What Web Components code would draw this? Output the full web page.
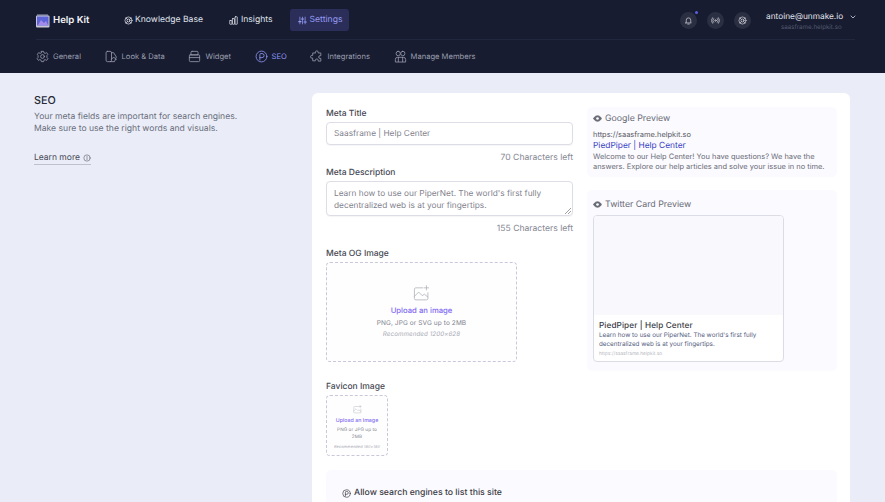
<!DOCTYPE html>
<html><head><meta charset="utf-8"><title>Help Kit SEO</title>
<style>
html,body{margin:0;padding:0;height:502px;overflow:hidden;background:#eaedf8;font-family:Inter,"Liberation Sans",sans-serif;text-rendering:geometricPrecision}
</style></head><body>
<hk-header></hk-header>
<hk-page></hk-page>
<script>
const I={
 kb:'<circle cx="12" cy="12" r="9.500"/><circle cx="12" cy="12" r="4"/><path d="M5.300 5.300l3.900 3.900M18.700 5.300l-3.900 3.900M5.300 18.700l3.900-3.900M18.700 18.700l-3.900-3.900"/>',
 ins:'<rect x="2" y="12" width="6" height="10" rx="1"/><rect x="9" y="7" width="6" height="15" rx="1"/><rect x="16" y="2" width="6" height="20" rx="1"/>',
 set:'<path d="M5 3v18M12 3v18M19 3v18"/><path d="M2 15h6M9 8h6M16 16h6" stroke-width="3"/>',
 gear:'<path d="M10 2.500h4l.7 2.800 2.300 1 2.500-1.500 2.500 3.200-1.800 2.200v3.600l1.800 2.200-2.500 3.200-2.500-1.500-2.300 1-.7 2.800h-4l-.7-2.800-2.300-1-2.500 1.500-2.500-3.200 1.800-2.200v-3.600L2.500 8l2.500-3.200 2.500 1.500 2.300-1z"/><circle cx="12" cy="12" r="3.500"/>',
 look:'<rect x="2" y="2.500" width="10" height="19" rx="2.500"/><path d="M12 5h4l5 8-3.500 8.500H10M12 17l4-4 5 5"/>',
 widget:'<path d="M7.500 2.500h9a2 2 0 0 1 2 2V9h-13V4.500a2 2 0 0 1 2-2zM4 9h16a1.500 1.500 0 0 1 1.500 1.500v9a2 2 0 0 1-2 2h-15a2 2 0 0 1-2-2v-9A1.500 1.500 0 0 1 4 9zM2.500 14h19"/>',
 seo:'<circle cx="12" cy="12" r="10"/><path d="M9 18.500V8.500a2 2 0 0 1 2-2h2a3.800 3.800 0 0 1 0 7.600H9"/>',
 puzzle:'<path d="M10 4a2.500 2.500 0 0 1 5 0v1.500h5v5h-1.500a2.500 2.500 0 0 0 0 5H20v5h-5v-1.500a2.500 2.500 0 0 0-5 0V20H5v-5H3.500a2.500 2.500 0 0 1 0-5H5V5.500h5z"/>',
 members:'<rect x="4" y="2.500" width="7.500" height="8" rx="3.500"/><rect x="12.500" y="2.500" width="7.500" height="8" rx="3.500"/><path d="M2.500 21.500v-4a4 4 0 0 1 4-4h11a4 4 0 0 1 4 4v4zM8 13.500v8M16 13.500v8"/>',
 bell:'<path d="M6 17V11a6 6 0 0 1 12 0v6l1.500 1.500h-15zM10 21.500h4"/>',
 radio:'<circle cx="12" cy="12" r="2"/><path d="M7 7a7 7 0 0 0 0 10M17 7a7 7 0 0 1 0 10M4 4.500a11 11 0 0 0 0 15M20 4.500a11 11 0 0 1 0 15"/>',
 eye:'<path d="M1 12s4-8 11-8 11 8 11 8-4 8-11 8S1 12 1 12z" fill="currentColor"/><circle cx="12" cy="12" r="3.500" fill="#fff" stroke="none"/>',
 info:'<circle cx="12" cy="12" r="9.500"/><path d="M12 11v6M12 7v1.500"/>',
 chev:'<path d="M6 9l6 6 6-6"/>',
 img:'<path d="M14 4H4a2 2 0 0 0-2 2v13a2 2 0 0 0 2 2h15a2 2 0 0 0 2-2v-8"/><path d="M2 16l6-6 5 5 3-2 5 4"/><path d="M19 1v6M16 4h6"/>'
};
const svg=(n,s,w=1.7)=>`<svg width="${s}" height="${s}" viewBox="0 0 24 24" fill="none" stroke="currentColor" stroke-width="${w}" stroke-linecap="round" stroke-linejoin="round" aria-hidden="true">${I[n]}</svg>`;
class Base extends HTMLElement{
 constructor(){super();this.attachShadow({mode:'open'}).innerHTML=this.markup()}
}
function def(n,c){customElements.define(n,c)}
def('hk-nav-link',class extends Base{markup(){const a=this.hasAttribute('active');const t=this.hasAttribute('tight');return `<style>
:host{display:inline-flex;align-items:center;gap:${t?2:3}px;height:22px;padding:0 ${t?10:(a?7:8)}px 0 8px;${a?'margin-left:1px;':''}border-radius:3px;font-size:8.600px;color:${a?'#949bf3':'#dfe1ea'};background:${a?'#2b2e58':'transparent'}}
</style>${svg(this.getAttribute('icon'),9,2)}<slot></slot>`}});
def('hk-sub-link',class extends Base{markup(){const a=this.hasAttribute('active');return `<style>
:host{display:inline-flex;align-items:center;gap:4px;font-size:7.600px;color:${a?'#8f97f2':'#9a9dac'}}
svg{flex:none}
</style>${svg(this.getAttribute('icon'),13,1.500)}<slot></slot>`}});
def('hk-round-btn',class extends Base{markup(){return `<style>
:host{position:relative;display:flex;align-items:center;justify-content:center;width:17px;height:17px;border-radius:50%;background:#2b2f42;color:#c8cad4}
i{position:absolute;top:-1px;right:-1px;width:3.500px;height:3.500px;border-radius:50%;background:#5a5fe0}
</style>${svg(this.getAttribute('icon'),9,2)}${this.hasAttribute('dot')?'<i></i>':''}`}});
def('hk-header',class extends Base{markup(){return `<style>
:host{display:block;height:73px;background:#171c31;box-sizing:border-box;padding:0 30px 0 36px}
.top{display:flex;align-items:center;height:38px;box-sizing:content-box;border-bottom:1px solid #222740;padding-top:1px}
.logo{display:flex;align-items:center;gap:3px;font-size:9.600px;font-weight:600;color:#f3f4f8;width:80px;flex:none}
nav{display:flex;gap:8px;align-items:center}
.right{margin-left:auto;display:flex;align-items:center;gap:10px}
.acct{margin-left:5px;width:89px;display:flex;flex-direction:column;align-items:flex-start;position:relative;top:1.500px}
.mail{display:flex;align-items:center;gap:6px;font-size:8.300px;color:#e4e5ec}
.mail svg{color:#c8cad4}
.sub{font-size:6.200px;color:#555a6f;margin-left:15px;margin-top:1.500px}
.subnav{display:flex;align-items:center;height:33px;gap:23.600px;position:relative;top:-.5px}
</style>
<div class="top"><div class="logo"><svg width="14" height="15" viewBox="0 0 14 15"><rect x="1" y="1" width="11" height="2" fill="#59607e"/><rect x="0" y="2.500" width="13.500" height="12" rx="1" fill="#c9c7d6"/><rect x="1" y="3.500" width="11.500" height="9" fill="#5d64d8"/><path d="M2 12l3-5 3 3 2-2 2 4z" fill="#a58ae8"/></svg><span>Help Kit</span></div>
<nav><hk-nav-link icon="kb" tight>Knowledge Base</hk-nav-link><hk-nav-link icon="ins">Insights</hk-nav-link><hk-nav-link icon="set" active>Settings</hk-nav-link></nav>
<div class="right"><hk-round-btn icon="bell" dot></hk-round-btn><hk-round-btn icon="radio"></hk-round-btn><hk-round-btn icon="kb"></hk-round-btn>
<div class="acct"><div class="mail">antoine@unmake.io ${svg('chev',8,2.500)}</div><div class="sub">saasframe.helpkit.so</div></div></div></div>
<div class="subnav"><hk-sub-link icon="gear">General</hk-sub-link><hk-sub-link icon="look">Look &amp; Data</hk-sub-link><hk-sub-link icon="widget">Widget</hk-sub-link><hk-sub-link icon="seo" active>SEO</hk-sub-link><hk-sub-link icon="puzzle">Integrations</hk-sub-link><hk-sub-link icon="members">Manage Members</hk-sub-link></div>`}});
def('hk-field',class extends Base{markup(){return `<style>
:host{display:block}
label{display:block;font-size:8.500px;font-weight:500;color:#464854;line-height:12px;padding-top:1px;margin-bottom:2px}
.hint{text-align:right;font-size:8.600px;line-height:12px;color:#868894;margin:7px 0 -1px}
</style><label>${this.getAttribute('label')}</label><slot></slot>${this.hasAttribute('hint')?`<div class="hint">${this.getAttribute('hint')}</div>`:''}`}});
def('hk-input',class extends Base{markup(){const m=this.hasAttribute('multi');return `<style>
:host{display:block;position:relative;box-sizing:border-box;border:1px solid #dcdde6;border-radius:4px;background:#fff;padding:${m?'5.500px 7px 0':'1px 7px 0'};${m?'height:35px':'height:23px;display:flex;align-items:center'};font-size:8.300px;line-height:12.400px;color:#7f818d;box-shadow:0 1px 1px rgba(30,30,60,.04)}
svg{position:absolute;right:1px;bottom:1px}
</style><slot></slot>${m?'<svg width="6" height="6" viewBox="0 0 6 6" stroke="#777" stroke-width=".7"><path d="M0 6L6 0M3 6L6 3"/></svg>':''}`}});
def('hk-upload',class extends Base{markup(){const s=this.hasAttribute('small');return `<style>
:host{display:flex;flex-direction:column;align-items:center;justify-content:center;box-sizing:border-box;border:1px dashed #c9c8da;border-radius:4px;background:#fefefe;text-align:center;width:${s?'62px':'191px'};height:${s?'61px':'100px'};${s?'padding-top:4px':''}}
svg{color:#aeb0ba}
.u{color:#8169f2;font-size:${s?'5.300px':'7.700px'};font-weight:500;margin-top:${s?'2.500px':'3px'};line-height:${s?'8px':'12px'}}
.p{color:#80828e;font-size:${s?'4.600px':'6.500px'};line-height:${s?'7px':'9px'};margin-top:2px;width:${s?'42px':'auto'};letter-spacing:.1px}
.r{color:#a9abb5;font-style:italic;font-size:${s?'3.900px':'6.200px'};line-height:${s?'7px':'9px'};margin-top:2px;letter-spacing:.1px}
</style>${svg('img',s?9:17,1.100)}<div class="u">Upload an image</div><div class="p">${this.getAttribute('types')}</div><div class="r">${this.getAttribute('rec')}</div>`}});
def('hk-preview',class extends Base{markup(){return `<style>
:host{display:block;background:#fbfafe;border-radius:5px;padding:${this.getAttribute('pad')}}
.h{display:flex;align-items:center;gap:3px;font-size:8.800px;line-height:15px;color:#686a76}
</style><div class="h">${svg('eye',9,1)}<span>${this.getAttribute('title')}</span></div><slot></slot>`}});
def('hk-google',class extends Base{markup(){return `<style>
:host{display:block;font-size:7.450px;color:#696b77;line-height:10.300px;margin-top:4px}
.u{color:#55575f;line-height:10.500px}.t{font-size:8.400px;line-height:11.500px;color:#3740c4}
</style><div class="u">https://saasframe.helpkit.so</div><div class="t">PiedPiper | Help Center</div><div>Welcome to our Help Center! You have questions? We have the answers. Explore our help articles and solve your issue in no time.</div>`}});
def('hk-card-preview',class extends Base{markup(){return `<style>
:host{display:block;width:191px;box-sizing:border-box;border:1px solid #dcdce6;border-radius:4px;margin-top:3px;height:147px;overflow:hidden;background:#fff}
.img{height:99px;background:#f9f8fd}
.b{padding:5px 5px 0}
.t{font-size:8.200px;font-weight:500;color:#3a3b45;line-height:10px;letter-spacing:.1px}
.d{font-size:6.300px;color:#565e80;line-height:9.300px;margin-top:.5px}
.l{font-size:4.800px;color:#b5b7c0;line-height:8px;margin-top:1px}
</style><div class="img"></div><div class="b"><div class="t">PiedPiper | Help Center</div><div class="d">Learn how to use our PiperNet. The world's first fully decentralized web is at your fingertips.</div><div class="l">https://saasframe.helpkit.so</div></div>`}});
def('hk-aside',class extends Base{markup(){return `<style>
:host{display:block;width:278px;flex:none;box-sizing:border-box}
h2{margin:0;font-size:10.800px;font-weight:500;color:#272937;line-height:15px}
p{margin:3px 0 0;font-size:8.600px;line-height:12.200px;color:#6b6d7c}
a{display:inline-flex;align-items:center;gap:3px;margin-top:17.600px;font-size:8.500px;color:#474955;border-bottom:1px solid #bfc1cc;padding-bottom:1px;line-height:10px}
</style><h2>SEO</h2><p>Your meta fields are important for search engines.<br>Make sure to use the right words and visuals.</p><a>Learn more ${svg('info',8,1.600)}</a>`}});
def('hk-page',class extends Base{markup(){return `<style>
:host{display:flex;padding:20px 35px 0 34px;height:429px;box-sizing:border-box;overflow:hidden}
.card{width:538px;height:600px;flex:none;background:#fff;border-radius:6px 6px 0 0;padding:14px 13px 0 14px;box-sizing:border-box}
.cols{display:grid;grid-template-columns:247px 250px;column-gap:14px}
.l{display:flex;flex-direction:column}
.r{display:flex;flex-direction:column;gap:13px}
.allow{margin-top:14px;background:#fbfafe;border-radius:5px;height:60px;padding:15.500px 16px;box-sizing:border-box;display:flex;align-items:flex-start;gap:3px;font-size:8.700px;font-weight:500;color:#3a3b45;line-height:15px}
.allow svg{margin-top:3px}
</style>
<hk-aside></hk-aside>
<div class="card"><div class="cols"><div class="l">
<hk-field label="Meta Title" hint="70 Characters left"><hk-input>Saasframe | Help Center</hk-input></hk-field>
<hk-field label="Meta Description" hint="155 Characters left" style="margin-top:3px"><hk-input multi>Learn how to use our PiperNet. The world's first fully decentralized web is at your fingertips.</hk-input></hk-field>
<hk-field label="Meta OG Image" style="margin-top:13px"><hk-upload types="PNG, JPG or SVG up to 2MB" rec="Recommended 1200×628"></hk-upload></hk-field>
<hk-field label="Favicon Image" style="margin-top:18px"><hk-upload small types="PNG or JPG up to 2MB" rec="Recommended 180×180"></hk-upload></hk-field>
</div><div class="r">
<hk-preview title="Google Preview" pad="4px 6px 4.500px"><hk-google></hk-google></hk-preview>
<hk-preview title="Twitter Card Preview" pad="7px 6px 9px"><hk-card-preview></hk-card-preview></hk-preview>
</div></div>
<div class="allow">${svg('seo',9,1.800)}<span>Allow search engines to list this site</span></div>
</div>`}});
</script>
</body></html>
